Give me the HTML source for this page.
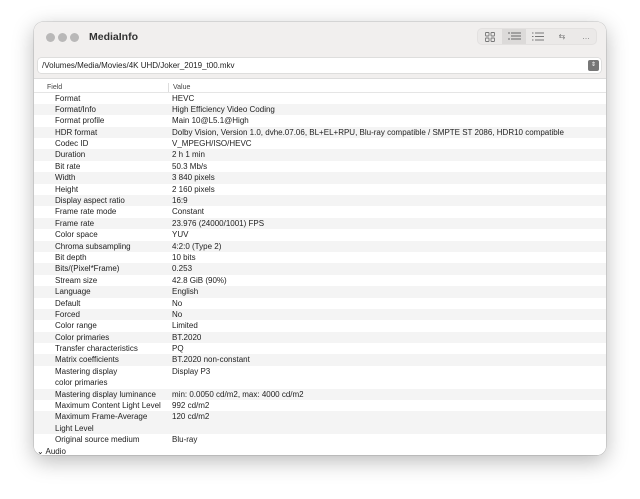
<!DOCTYPE html>
<html><head><style>
*{margin:0;padding:0;box-sizing:border-box}
body{width:640px;height:499px;background:#fff;font-family:"Liberation Sans",sans-serif;position:relative;overflow:hidden}
.win{position:absolute;left:34px;top:22px;width:572px;height:433px;background:#fff;border-radius:9px;box-shadow:0 6px 22px rgba(0,0,0,.28),0 0 0 .5px rgba(0,0,0,.2);overflow:hidden}
.tb{position:absolute;left:0;top:0;width:100%;height:57px;background:#f1efee;border-bottom:1px solid #dcdcdc}
.dot{position:absolute;top:11px;width:9px;height:9px;border-radius:50%;background:#b9b8b8}
.title{position:absolute;left:55px;top:9px;font-size:10.5px;font-weight:bold;color:#333}
.seg{position:absolute;left:443px;top:6px;width:120px;height:17px;border-radius:5px;background:#ebe9e8;border:1px solid #e3e1e0}
.seg div{position:absolute;top:0;height:15px;font-size:8px;color:#777;text-align:center;line-height:15px}
.path{position:absolute;left:4px;top:36px;width:563px;height:15px;background:#fff;border-radius:3px;box-shadow:0 0 0 .5px #ccc;font-size:8px;line-height:15px;padding-left:4px;color:#222}
.stp{position:absolute;right:2px;top:2px;width:11px;height:11px;border-radius:2px;background:#777;color:#fff;font-size:6px;line-height:11px;text-align:center}
.hdr{position:absolute;left:0;top:60px;width:100%;height:11px;border-bottom:1px solid #e5e5e5;font-size:7px;color:#444;background:#fff}
.hdr span{position:absolute;top:2px}
.sep{position:absolute;left:134px;top:1px;width:1px;height:9px;background:#ddd}
.rows{position:absolute;left:0;top:70.5px;width:100%}
.r{position:relative;height:11.4px;font-size:8px;color:#222;line-height:11.4px}
.r.t{height:22.8px}
.r:nth-child(even){background:#f4f4f4}
.r .f{position:absolute;left:21px;top:0}
.r .v{position:absolute;left:138px;top:0;white-space:nowrap}
</style></head><body>
<div class="win">
<div class="tb">
<div class="dot" style="left:12px"></div><div class="dot" style="left:24px"></div><div class="dot" style="left:36px"></div>
<div class="title">MediaInfo</div>
<div class="seg">
<div style="left:0;width:24px"><svg width="10" height="10" viewBox="0 0 10 10" style="margin-top:3px" fill="none" stroke="#777" stroke-width=".9"><rect x=".5" y=".5" width="3.5" height="3.5" rx=".6"/><rect x="6" y=".5" width="3.5" height="3.5" rx=".6"/><rect x=".5" y="6" width="3.5" height="3.5" rx=".6"/><rect x="6" y="6" width="3.5" height="3.5" rx=".6"/></svg></div>
<div style="left:24px;width:24px;background:#dcdad9"><svg width="13" height="9" viewBox="0 0 13 9" style="margin-top:3px" stroke="#666" stroke-width="1"><path d="M0 1h2M3 1h10M3 4h10M3 7h10M0 7h2"/></svg></div>
<div style="left:48px;width:24px"><svg width="12" height="9" viewBox="0 0 12 9" style="margin-top:3px" stroke="#777" stroke-width="1"><path d="M0 1h1.5M3 1h9M0 4.5h1.5M3 4.5h9M0 8h1.5M3 8h9"/></svg></div>
<div style="left:72px;width:24px">⇆</div>
<div style="left:96px;width:24px">…</div>
</div>
<div class="path">/Volumes/Media/Movies/4K UHD/Joker_2019_t00.mkv<div class="stp">⇕</div></div>
</div>
<div class="hdr"><span style="left:13px">Field</span><div class="sep"></div><span style="left:139px">Value</span></div>
<div class="rows">
<div class="r"><span class="f">Format</span><span class="v">HEVC</span></div>
<div class="r"><span class="f">Format/Info</span><span class="v">High Efficiency Video Coding</span></div>
<div class="r"><span class="f">Format profile</span><span class="v">Main 10@L5.1@High</span></div>
<div class="r"><span class="f">HDR format</span><span class="v">Dolby Vision, Version 1.0, dvhe.07.06, BL+EL+RPU, Blu-ray compatible / SMPTE ST 2086, HDR10 compatible</span></div>
<div class="r"><span class="f">Codec ID</span><span class="v">V_MPEGH/ISO/HEVC</span></div>
<div class="r"><span class="f">Duration</span><span class="v">2 h 1 min</span></div>
<div class="r"><span class="f">Bit rate</span><span class="v">50.3 Mb/s</span></div>
<div class="r"><span class="f">Width</span><span class="v">3 840 pixels</span></div>
<div class="r"><span class="f">Height</span><span class="v">2 160 pixels</span></div>
<div class="r"><span class="f">Display aspect ratio</span><span class="v">16:9</span></div>
<div class="r"><span class="f">Frame rate mode</span><span class="v">Constant</span></div>
<div class="r"><span class="f">Frame rate</span><span class="v">23.976 (24000/1001) FPS</span></div>
<div class="r"><span class="f">Color space</span><span class="v">YUV</span></div>
<div class="r"><span class="f">Chroma subsampling</span><span class="v">4:2:0 (Type 2)</span></div>
<div class="r"><span class="f">Bit depth</span><span class="v">10 bits</span></div>
<div class="r"><span class="f">Bits/(Pixel*Frame)</span><span class="v">0.253</span></div>
<div class="r"><span class="f">Stream size</span><span class="v">42.8 GiB (90%)</span></div>
<div class="r"><span class="f">Language</span><span class="v">English</span></div>
<div class="r"><span class="f">Default</span><span class="v">No</span></div>
<div class="r"><span class="f">Forced</span><span class="v">No</span></div>
<div class="r"><span class="f">Color range</span><span class="v">Limited</span></div>
<div class="r"><span class="f">Color primaries</span><span class="v">BT.2020</span></div>
<div class="r"><span class="f">Transfer characteristics</span><span class="v">PQ</span></div>
<div class="r"><span class="f">Matrix coefficients</span><span class="v">BT.2020 non-constant</span></div>
<div class="r t"><span class="f">Mastering display<br>color primaries</span><span class="v">Display P3</span></div>
<div class="r"><span class="f">Mastering display luminance</span><span class="v">min: 0.0050 cd/m2, max: 4000 cd/m2</span></div>
<div class="r"><span class="f">Maximum Content Light Level</span><span class="v">992 cd/m2</span></div>
<div class="r t"><span class="f">Maximum Frame-Average<br>Light Level</span><span class="v">120 cd/m2</span></div>
<div class="r"><span class="f">Original source medium</span><span class="v">Blu-ray</span></div>
<div class="r" style="background:#fff"><span class="f" style="left:3px">⌄ Audio</span></div>
</div>
</div>
</body></html>
